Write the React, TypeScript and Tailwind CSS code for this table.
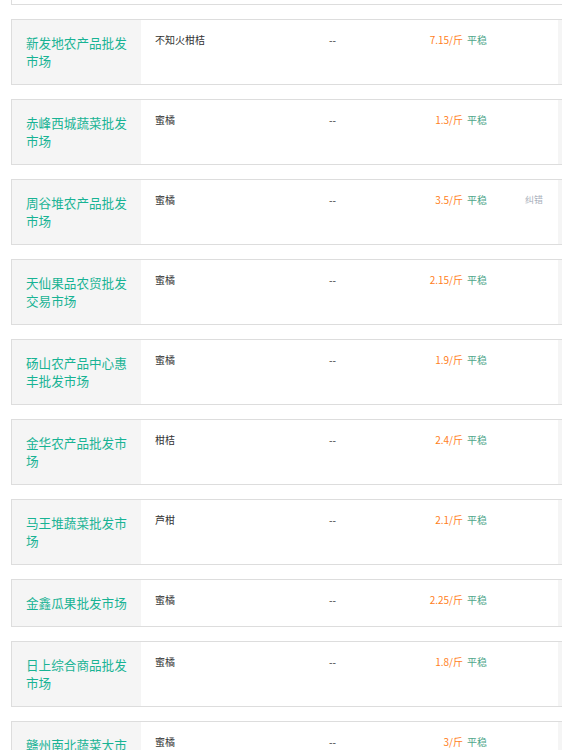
const rows = [
  { market: "新发地农产品批发市场", variety: "不知火柑桔", price: "7.15/斤" },
  { market: "赤峰西城蔬菜批发市场", variety: "蜜橘", price: "1.3/斤" },
  { market: "周谷堆农产品批发市场", variety: "蜜橘", price: "3.5/斤", report: true },
  { market: "天仙果品农贸批发交易市场", variety: "蜜橘", price: "2.15/斤" },
  { market: "砀山农产品中心惠丰批发市场", variety: "蜜橘", price: "1.9/斤" },
  { market: "金华农产品批发市场", variety: "柑桔", price: "2.4/斤" },
  { market: "马王堆蔬菜批发市场", variety: "芦柑", price: "2.1/斤" },
  { market: "金鑫瓜果批发市场", variety: "蜜橘", price: "2.25/斤" },
  { market: "日上综合商品批发市场", variety: "蜜橘", price: "1.8/斤" },
  { market: "赣州南北蔬菜大市场", variety: "蜜橘", price: "3/斤" },
];

const App = () => {
  return (
    <main
      className="w-[562px] h-[750px] overflow-hidden bg-white"
      style={{ fontFamily: '"Noto Sans CJK SC", "Noto Sans", sans-serif' }}
    >
      <div className="flex flex-col gap-[14px]">
        {/* tail of the previous block */}
        <div className="ml-[11px] w-[589px] h-[5px] border-x border-b border-[#ddd]" />

        {rows.map((row) => (
          <div
            key={row.market}
            className="ml-[11px] w-[589px] shrink-0 flex border border-[#ddd]"
          >
            <div className="w-[129px] shrink-0 bg-[#f5f5f5] pl-[14px] pr-[10px] py-[14px] text-[12.6px] leading-[18px] text-[#18b394]">
              {row.market}
            </div>
            <div className="w-[174px] shrink-0 pl-[14px] pt-[14px] text-[10px] leading-[12px] text-[#333]">
              {row.variety}
            </div>
            <div className="w-[86px] shrink-0 pl-[14px] pt-[14px] text-[10px] leading-[12px] text-[#333]">
              --
            </div>
            <div className="w-[100px] shrink-0 pr-[14px] pt-[14px] text-right text-[10px] leading-[12px]">
              <span className="text-[#ff7e1a]">{row.price}</span>
              <span className="ml-[4px] text-[#4fa68a]">平稳</span>
            </div>
            <div className="w-[57px] shrink-0 pl-[24px] pt-[14px] text-[9px] leading-[12px] text-[#a9afbb]">
              {row.report ? "纠错" : ""}
            </div>
            <div className="flex-1 bg-[#f5f5f5]" />
          </div>
        ))}
      </div>
    </main>
  );
};

export default App;
